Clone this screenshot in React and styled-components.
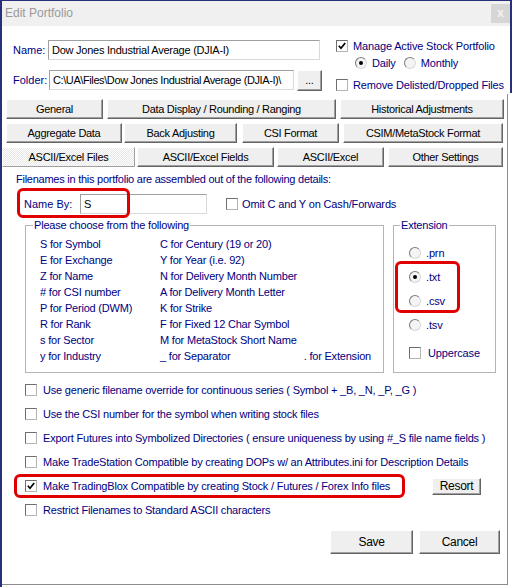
import React from 'react';
import styled, { createGlobalStyle } from 'styled-components';

const Global = createGlobalStyle`
  html, body { margin: 0; padding: 0; background: #fff; }
  body { font-family: "Liberation Sans", Arial, sans-serif; font-size: 11px; }
  * { box-sizing: border-box; }
`;

const NAVY = '#000080';
const RED = '#e00000';

const Window = styled.div`
  width: 512px;
  height: 587px;
  background: #fff;
  display: flex;
  flex-direction: column;
  border-left: 2px solid #27307a;
  overflow: hidden;
`;

const Header = styled.div`
  border-right: 2px solid #27307a;
  border-top: 1px solid #27307a;
`;

const TitleBar = styled.div`
  height: 25px;
  background: #f0f0f0;
  display: flex;
  align-items: center;
  justify-content: space-between;
  padding-left: 3px;
`;

const Title = styled.span`
  font-size: 12px;
  color: #9a9a9a;
  margin-top: -2px;
`;

const CloseBtn = styled.div`
  width: 19px;
  height: 19px;
  background: #d6d6d6;
  color: #f2f2f2;
  font-size: 12px;
  font-weight: bold;
  display: flex;
  align-items: center;
  justify-content: center;
  margin-top: -1px;
`;

const TopSection = styled.div`
  display: flex;
  padding: 14px 0 2px 11px;
`;

const LeftCol = styled.div`
  width: 308px;
  display: flex;
  flex-direction: column;
  gap: 10px;
`;

const RightCol = styled.div`
  margin-left: 15px;
  display: flex;
  flex-direction: column;
`;

const FieldRow = styled.div`
  display: flex;
  align-items: center;
  height: 20px;
`;

const Label = styled.span`
  color: ${NAVY};
  width: ${(p) => p.$w}px;
  flex: none;
  white-space: nowrap;
`;

const TextInput = styled.div`
  width: ${(p) => p.$w}px;
  height: ${(p) => p.$h || 20}px;
  border: 1px solid;
  border-color: #a0a0a0 #dadada #dadada #a0a0a0;
  background: #fff;
  color: #000;
  padding-left: 3px;
  display: flex;
  align-items: center;
  white-space: nowrap;
  overflow: hidden;
  letter-spacing: -0.25px;
  flex: none;
`;

const Button = styled.div`
  width: ${(p) => p.$w}px;
  height: ${(p) => p.$h || 20}px;
  margin-left: ${(p) => p.$ml || 0}px;
  flex: none;
  background: ${(p) =>
    p.$active
      ? 'repeating-conic-gradient(#ffffff 0 25%, #e6e6e6 0 50%) 0 0 / 2px 2px'
      : '#efefef'};
  border: 1px solid;
  border-color: ${(p) => (p.$active ? '#ffffff #a0a0a0 #a0a0a0 #ffffff' : '#ffffff #646464 #646464 #ffffff')};
  box-shadow: ${(p) => (p.$active ? 'none' : 'inset -1px -1px #a0a0a0')};
  color: #000;
  font-size: ${(p) => p.$fs || 11}px;
  letter-spacing: -0.3px;
  display: flex;
  align-items: center;
  justify-content: center;
  white-space: nowrap;
`;

const CheckRow = styled.div`
  display: flex;
  align-items: center;
  height: ${(p) => p.$h || 12}px;
  margin-top: ${(p) => p.$mt || 0}px;
  padding-left: ${(p) => p.$pl || 0}px;
  gap: ${(p) => p.$gap || 5}px;
  color: ${NAVY};
  white-space: nowrap;
  letter-spacing: -0.15px;
  position: relative;
`;

const Box = styled.span`
  width: 12px;
  height: 12px;
  flex: none;
  border: 1px solid;
  border-color: #6e6e6e #b4b4b4 #b4b4b4 #6e6e6e;
  background: #fff;
  display: inline-flex;
  align-items: center;
  justify-content: center;
`;

const RadioCircle = styled.span`
  width: 12px;
  height: 12px;
  flex: none;
  border-radius: 50%;
  border: 1px solid;
  border-color: #7a7a7a #d8d8d8 #d8d8d8 #7a7a7a;
  background: #f4f4f4;
  display: inline-flex;
  align-items: center;
  justify-content: center;
  &::after {
    content: '';
    width: 4px;
    height: 4px;
    border-radius: 50%;
    background: ${(p) => (p.$on ? '#000' : 'transparent')};
  }
`;

const Frame = styled.div`
  flex: 1;
  margin: 1px 4px 2px 0;
  border-right: 1px solid #8c8c8c;
  border-bottom: 1px solid #8c8c8c;
  display: flex;
  flex-direction: column;
  padding-top: 5px;
`;

const TabRows = styled.div`
  display: flex;
  flex-direction: column;
  gap: 4px;
`;

const TabRow = styled.div`
  display: flex;
  height: 20px;
`;

const Intro = styled.div`
  color: ${NAVY};
  margin: 6px 0 0 14px;
  line-height: 13px;
  letter-spacing: -0.25px;
`;

const NameByRow = styled.div`
  position: relative;
  display: flex;
  align-items: center;
  height: 20px;
  margin-top: 8px;
  padding-left: 22px;
`;

const Highlight = styled.div`
  position: absolute;
  left: ${(p) => p.$x}px;
  top: ${(p) => p.$y}px;
  width: ${(p) => p.$w}px;
  height: ${(p) => p.$h}px;
  border: 3px solid ${RED};
  border-radius: 6px;
  pointer-events: none;
`;

const Groups = styled.div`
  display: flex;
  margin: 5px 0 0 23px;
  gap: 9px;
`;

const Group = styled.fieldset`
  position: relative;
  margin: 0;
  width: ${(p) => p.$w}px;
  height: 154px;
  border: 1px solid #b4b4b4;
  padding: 0 0 0 ${(p) => p.$pl}px;
  min-width: 0;
`;

const Legend = styled.legend`
  color: ${NAVY};
  padding: 0 1px;
  line-height: 13px;
  letter-spacing: -0.2px;
`;

const ChoiceGrid = styled.div`
  display: grid;
  grid-template-columns: 120px 1fr;
  grid-auto-rows: 16px;
  align-items: center;
  padding: 4px 12px 0 7px;
  color: ${NAVY};
  white-space: nowrap;
  letter-spacing: -0.2px;
`;

const SplitCell = styled.div`
  display: flex;
  justify-content: space-between;
`;

const ExtList = styled.div`
  position: relative;
  display: flex;
  flex-direction: column;
  padding: 9px 0 0 9px;
`;

const CheckList = styled.div`
  display: flex;
  flex-direction: column;
  margin-top: 5px;
`;

const ListRow = styled.div`
  position: relative;
  display: flex;
  align-items: center;
  height: 24px;
  padding-left: 23px;
`;

const ListLabel = styled.div`
  display: flex;
  align-items: center;
  gap: 6px;
  color: ${NAVY};
  white-space: nowrap;
  letter-spacing: -0.2px;
  flex: ${(p) => (p.$w ? `0 0 ${p.$w}px` : '0 1 auto')};
`;

const Footer = styled.div`
  display: flex;
  justify-content: flex-end;
  gap: 6px;
  margin-top: 8px;
  padding-right: 7px;
`;

const Check = ({ on }) => (
  <Box>
    {on && (
      <svg width="8" height="8" viewBox="0 0 8 8">
        <polyline points="0.8,3.8 3,6.2 7.2,1" fill="none" stroke="#000" strokeWidth="1.7" />
      </svg>
    )}
  </Box>
);

const choices = [
  ['S for Symbol', 'C for Century (19 or 20)'],
  ['E for Exchange', 'Y for Year (i.e. 92)'],
  ['Z for Name', 'N for Delivery Month Number'],
  ['# for CSI number', 'A for Delivery Month Letter'],
  ['P for Period (DWM)', 'K for Strike'],
  ['R for Rank', 'F for Fixed 12 Char Symbol'],
  ['s for Sector', 'M for MetaStock Short Name'],
];

const options = [
  { text: 'Use generic filename override for continuous series ( Symbol + _B, _N, _P, _G )' },
  { text: 'Use the CSI number for the symbol when writing stock files' },
  { text: 'Export Futures into Symbolized Directories ( ensure uniqueness by using #_S file name fields )' },
  { text: 'Make TradeStation Compatible by creating DOPs w/ an Attributes.ini for Description Details' },
  { text: 'Make TradingBlox Compatible by creating Stock / Futures / Forex Info files', on: true, resort: true },
  { text: 'Restrict Filenames to Standard ASCII characters' },
];

export default function App() {
  return (
    <>
      <Global />
      <Window>
        <Header>
          <TitleBar>
            <Title>Edit Portfolio</Title>
            <CloseBtn>x</CloseBtn>
          </TitleBar>
          <TopSection>
            <LeftCol>
              <FieldRow>
                <Label $w={35}>Name:</Label>
                <TextInput $w={272}>Dow Jones Industrial Average (DJIA-I)</TextInput>
              </FieldRow>
              <FieldRow>
                <Label $w={36}>Folder:</Label>
                <TextInput $w={245} style={{ letterSpacing: '-0.4px' }}>
                  C:\UA\Files\Dow Jones Industrial Average (DJIA-I)\
                </TextInput>
                <Button $w={25} $h={21} $ml={3}>...</Button>
              </FieldRow>
            </LeftCol>
            <RightCol>
              <CheckRow $gap={5}>
                <Check on />
                Manage Active Stock Portfolio
              </CheckRow>
              <CheckRow $mt={5} $pl={19}>
                <RadioCircle $on />
                <span style={{ marginRight: 3 }}>Daily</span>
                <RadioCircle />
                Monthly
              </CheckRow>
              <CheckRow $mt={10} $gap={5}>
                <Check />
                Remove Delisted/Dropped Files
              </CheckRow>
            </RightCol>
          </TopSection>
        </Header>
        <Frame>
          <TabRows>
            <TabRow>
              <Button $w={97} $ml={4}>General</Button>
              <Button $w={229} $ml={4}>Data Display / Rounding / Ranging</Button>
              <Button $w={164} $ml={4}>Historical Adjustments</Button>
            </TabRow>
            <TabRow>
              <Button $w={116} $ml={4}>Aggregate Data</Button>
              <Button $w={113} $ml={2}>Back Adjusting</Button>
              <Button $w={97} $ml={5}>CSI Format</Button>
              <Button $w={160} $ml={4}>CSIM/MetaStock Format</Button>
            </TabRow>
            <TabRow>
              <Button $w={133} $active>ASCII/Excel Files</Button>
              <Button $w={137} $ml={2}>ASCII/Excel Fields</Button>
              <Button $w={107} $ml={3}>ASCII/Excel</Button>
              <Button $w={115} $ml={4}>Other Settings</Button>
            </TabRow>
          </TabRows>
          <Intro>Filenames in this portfolio are assembled out of the following details:</Intro>
          <NameByRow>
            <Label $w={56}>Name By:</Label>
            <TextInput $w={127} $h={20}>S</TextInput>
            <CheckRow $gap={4} style={{ marginLeft: 19 }}>
              <Check />
              Omit C and Y on Cash/Forwards
            </CheckRow>
            <Highlight $x={15} $y={-6} $w={113} $h={30} />
          </NameByRow>
          <Groups>
            <Group $w={359} $pl={7}>
              <Legend>Please choose from the following</Legend>
              <ChoiceGrid>
                {choices.map(([a, b]) => (
                  <React.Fragment key={a}>
                    <span>{a}</span>
                    <span>{b}</span>
                  </React.Fragment>
                ))}
                <span>y for Industry</span>
                <SplitCell>
                  <span>_ for Separator</span>
                  <span>. for Extension</span>
                </SplitCell>
              </ChoiceGrid>
            </Group>
            <Group $w={103} $pl={6}>
              <Legend>Extension</Legend>
              <ExtList>
                {['.prn', '.txt', '.csv', '.tsv'].map((e) => (
                  <CheckRow key={e} $h={24} $gap={5}>
                    <RadioCircle $on={e === '.txt'} />
                    {e}
                  </CheckRow>
                ))}
                <CheckRow $h={24} $mt={4} $gap={7}>
                  <Check />
                  Uppercase
                </CheckRow>
                <Highlight $x={-5} $y={29} $w={65} $h={52} />
              </ExtList>
            </Group>
          </Groups>
          <CheckList>
            {options.map((o) => (
              <ListRow key={o.text}>
                <ListLabel $w={o.resort ? 407 : 0}>
                  <Check on={o.on} />
                  {o.text}
                </ListLabel>
                {o.resort && (
                  <>
                    <Button $w={49} $h={17} $fs={12}>Resort</Button>
                    <Highlight $x={12} $y={0} $w={391} $h={24} />
                  </>
                )}
              </ListRow>
            ))}
          </CheckList>
          <Footer>
            <Button $w={83} $h={24} $fs={12}>Save</Button>
            <Button $w={81} $h={24} $fs={12}>Cancel</Button>
          </Footer>
        </Frame>
      </Window>
    </>
  );
}
